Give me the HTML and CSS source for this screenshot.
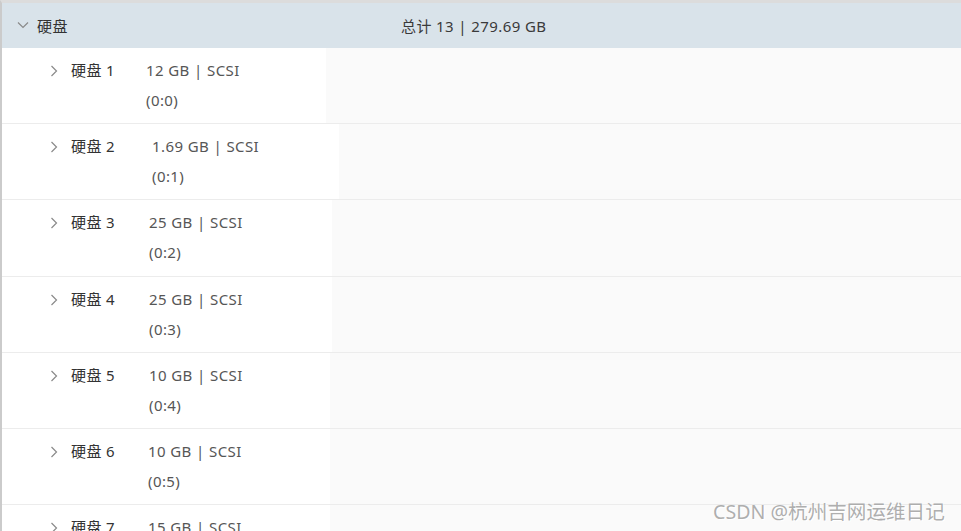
FILE: index.html
```html
<!DOCTYPE html>
<html lang="zh">
<head>
<meta charset="utf-8">
<link rel="stylesheet" href="styles.css">
</head>
<body>
<div class="panel">
  <div class="header">
    <div class="header-title">
      <svg class="chev-down" width="12" height="8" viewBox="0 0 12 8"><path d="M1 1.5 L6 6.5 L11 1.5" fill="none" stroke="#8a8a8a" stroke-width="1.2"/></svg>
      <span>硬盘</span>
    </div>
    <div class="header-total">总计 13 | 279.69 GB</div>
  </div>
  <div class="rows">
    <div class="row r1">
      <div class="main">
        <svg class="chev" width="8" height="12" viewBox="0 0 8 12"><path d="M1.5 1 L6.5 6 L1.5 11" fill="none" stroke="#8a8a8a" stroke-width="1.2"/></svg>
        <span class="label">硬盘 1</span>
        <span class="value">12 GB | SCSI<br>(0:0)</span>
      </div>
    </div>
    <div class="row r2">
      <div class="main">
        <svg class="chev" width="8" height="12" viewBox="0 0 8 12"><path d="M1.5 1 L6.5 6 L1.5 11" fill="none" stroke="#8a8a8a" stroke-width="1.2"/></svg>
        <span class="label">硬盘 2</span>
        <span class="value">1.69 GB | SCSI<br>(0:1)</span>
      </div>
    </div>
    <div class="row r3">
      <div class="main">
        <svg class="chev" width="8" height="12" viewBox="0 0 8 12"><path d="M1.5 1 L6.5 6 L1.5 11" fill="none" stroke="#8a8a8a" stroke-width="1.2"/></svg>
        <span class="label">硬盘 3</span>
        <span class="value">25 GB | SCSI<br>(0:2)</span>
      </div>
    </div>
    <div class="row r4">
      <div class="main">
        <svg class="chev" width="8" height="12" viewBox="0 0 8 12"><path d="M1.5 1 L6.5 6 L1.5 11" fill="none" stroke="#8a8a8a" stroke-width="1.2"/></svg>
        <span class="label">硬盘 4</span>
        <span class="value">25 GB | SCSI<br>(0:3)</span>
      </div>
    </div>
    <div class="row r5">
      <div class="main">
        <svg class="chev" width="8" height="12" viewBox="0 0 8 12"><path d="M1.5 1 L6.5 6 L1.5 11" fill="none" stroke="#8a8a8a" stroke-width="1.2"/></svg>
        <span class="label">硬盘 5</span>
        <span class="value">10 GB | SCSI<br>(0:4)</span>
      </div>
    </div>
    <div class="row r6">
      <div class="main">
        <svg class="chev" width="8" height="12" viewBox="0 0 8 12"><path d="M1.5 1 L6.5 6 L1.5 11" fill="none" stroke="#8a8a8a" stroke-width="1.2"/></svg>
        <span class="label">硬盘 6</span>
        <span class="value">10 GB | SCSI<br>(0:5)</span>
      </div>
    </div>
    <div class="row r7">
      <div class="main">
        <svg class="chev" width="8" height="12" viewBox="0 0 8 12"><path d="M1.5 1 L6.5 6 L1.5 11" fill="none" stroke="#8a8a8a" stroke-width="1.2"/></svg>
        <span class="label">硬盘 7</span>
        <span class="value">15 GB | SCSI<br>(0:6)</span>
      </div>
    </div>
  </div>
  <div class="watermark">CSDN @杭州吉网运维日记</div>
</div>
</body>
</html>
```
FILE: styles.css
```css
html, body {
  margin: 0;
  padding: 0;
  height: 100%;
  overflow: hidden;
  background: #fafafa;
}
body {
  font-family: "Noto Sans", "Noto Sans CJK SC", sans-serif;
  font-size: 15px;
  letter-spacing: 0.4px;
  color: #565656;
}
.panel {
  position: relative;
  height: 531px;
  border-top: 3px solid #dcdcdc;
  border-left: 2px solid #cbcbcb;
  box-sizing: border-box;
  overflow: hidden;
}
.header {
  height: 45px;
  background: #d9e3ea;
  display: flex;
  align-items: center;
}
.header-title {
  display: flex;
  align-items: center;
  width: 397px;
  padding-left: 15px;
  color: #333;
  box-sizing: border-box;
}
.chev-down {
  margin-right: 8px;
  margin-top: -2px;
}
.header-total {
  color: #3a3a3a;
  margin-left: 2px;
}
.row {
  height: 76.2px;
  border-bottom: 1px solid #ececec;
  box-sizing: border-box;
  background: #fafafa;
  display: flex;
}
.main {
  background: #fff;
  display: flex;
  align-items: flex-start;
  padding: 7px 0 0 48px;
  box-sizing: border-box;
  height: 100%;
  line-height: 30px;
}
.chev {
  margin-top: 10px;
  width: 8px;
  flex: none;
}
.label {
  color: #333;
  margin-left: 13px;
  flex: none;
}
.value {
  white-space: nowrap;
}
.r1 .main { width: 324px; }
.r1 .label { width: 75px; }
.r2 .main { width: 337px; }
.r2 .label { width: 81px; }
.r3 .main, .r4 .main { width: 330px; }
.r3 .label, .r4 .label { width: 78px; }
.r5 .main, .r6 .main, .r7 .main { width: 328px; }
.r5 .label { width: 78px; }
.r6 .label, .r7 .label { width: 77px; }
.watermark {
  position: absolute;
  left: 711px;
  top: 493px;
  font-size: 19.6px;
  letter-spacing: 0;
  color: rgba(160, 160, 160, 0.85);
  text-shadow: 1px 1px 0 #fff;
  white-space: nowrap;
}
```
